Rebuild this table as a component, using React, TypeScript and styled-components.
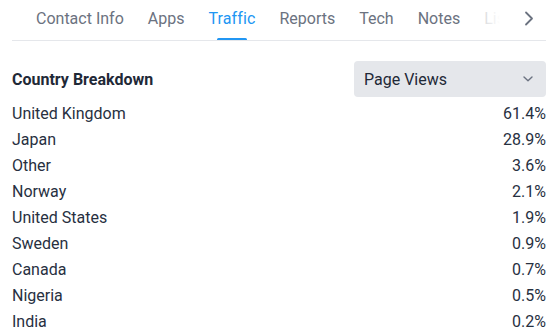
import React from "react";
import styled, { createGlobalStyle } from "styled-components";

const GlobalStyle = createGlobalStyle`
  body {
    margin: 0;
    background: #fff;
    font-family: Roboto, "Liberation Sans", sans-serif;
    color: #27303f;
  }
`;

const Page = styled.div`
  width: 560px;
  height: 336px;
  overflow: hidden;
  padding: 0 14px 0 12px;
  box-sizing: border-box;
`;

const TabBar = styled.div`
  position: relative;
  display: flex;
  align-items: stretch;
  height: 40px;
  border-bottom: 1px solid #e5e7eb;
`;

const TabStrip = styled.div`
  display: flex;
  flex: 1;
  overflow: hidden;
  padding-left: 12px;
  white-space: nowrap;
`;

const Tab = styled.div<{ $active?: boolean }>`
  position: relative;
  display: flex;
  align-items: center;
  padding: 0 12px 3px;
  font-size: 16px;
  letter-spacing: ${(p) => (p.$active ? "0.12px" : "0")};
  color: ${(p) => (p.$active ? "#2196f3" : "#6b7280")};
  flex-shrink: 0;

  &::after {
    content: "";
    display: ${(p) => (p.$active ? "block" : "none")};
    position: absolute;
    left: 50%;
    bottom: -1px;
    width: 30px;
    height: 3px;
    margin-left: -15px;
    border-radius: 2px;
    background: #2196f3;
  }
`;

const Fade = styled.div`
  position: absolute;
  right: 46px;
  top: 0;
  bottom: 1px;
  width: 40px;
  background: linear-gradient(to right, rgba(255, 255, 255, 0.2), rgba(255, 255, 255, 0.75) 60%, #fff);
  pointer-events: none;
`;

const ScrollButton = styled.div`
  width: 46px;
  display: flex;
  align-items: center;
  justify-content: flex-end;
  padding: 0 11px 3px 0;
  box-sizing: border-box;
  color: #6b7280;
`;

const Header = styled.div`
  display: flex;
  align-items: center;
  justify-content: space-between;
  margin-top: 20px;
`;

const Title = styled.div`
  font-size: 16px;
  font-weight: 700;
  color: #1f2937;
`;

const Select = styled.div`
  width: 192px;
  height: 36px;
  box-sizing: border-box;
  display: flex;
  align-items: center;
  justify-content: space-between;
  padding: 0 12px 0 10px;
  border-radius: 4px;
  background: #e5e7eb;
  font-size: 16px;
  color: #1f2937;
`;

const List = styled.div`
  margin-top: 3px;
`;

const Row = styled.div`
  display: flex;
  justify-content: space-between;
  align-items: center;
  height: 26px;
  font-size: 16px;
  color: #27303f;
`;

const tabs = ["Contact Info", "Apps", "Traffic", "Reports", "Tech", "Notes", "Lists"];

const countries: [string, string][] = [
  ["United Kingdom", "61.4%"],
  ["Japan", "28.9%"],
  ["Other", "3.6%"],
  ["Norway", "2.1%"],
  ["United States", "1.9%"],
  ["Sweden", "0.9%"],
  ["Canada", "0.7%"],
  ["Nigeria", "0.5%"],
  ["India", "0.2%"],
];

export default function App() {
  return (
    <Page>
      <GlobalStyle />
      <TabBar>
        <TabStrip>
          {tabs.map((t) => (
            <Tab key={t} $active={t === "Traffic"}>
              {t}
            </Tab>
          ))}
        </TabStrip>
        <Fade />
        <ScrollButton>
          <svg width="12" height="15" viewBox="0 0 12 15" fill="none">
            <path d="M3 1.5 L9 7.5 L3 13.5" stroke="currentColor" strokeWidth="1.8" strokeLinecap="round" strokeLinejoin="round" />
          </svg>
        </ScrollButton>
      </TabBar>
      <Header>
        <Title>Country Breakdown</Title>
        <Select>
          <span>Page Views</span>
          <svg width="12" height="8" viewBox="0 0 12 8" fill="none">
            <path d="M2 2 L6 5.8 L10 2" stroke="#6b7280" strokeWidth="1.4" strokeLinecap="round" strokeLinejoin="round" />
          </svg>
        </Select>
      </Header>
      <List>
        {countries.map(([name, pct]) => (
          <Row key={name}>
            <span>{name}</span>
            <span>{pct}</span>
          </Row>
        ))}
      </List>
    </Page>
  );
}
